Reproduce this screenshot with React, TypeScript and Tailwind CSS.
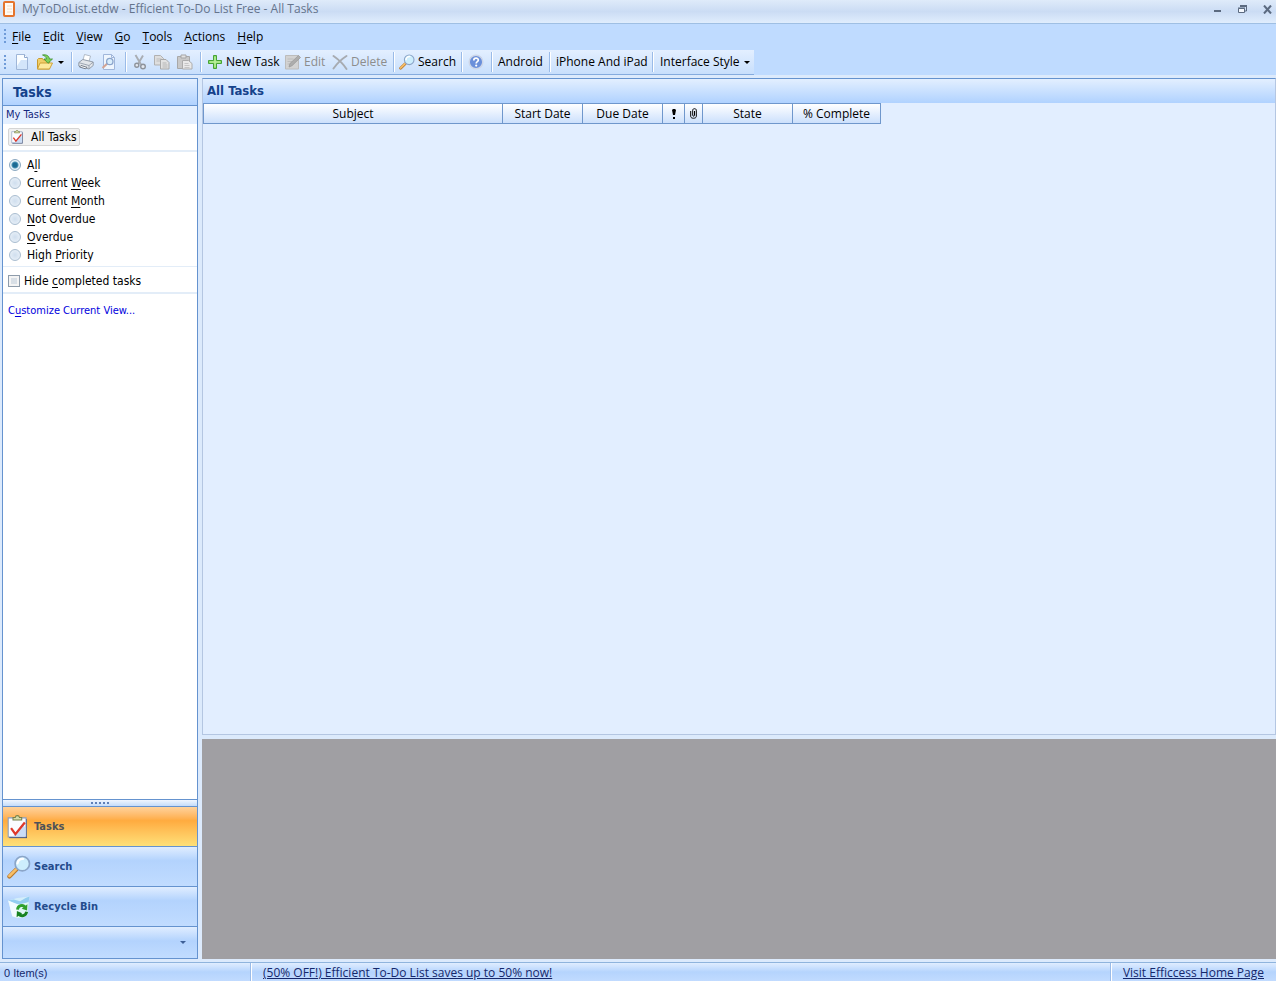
import { useState } from "react";
import type { ReactNode } from "react";
import clsx from "clsx";

// "&" marks the accelerator key, as in native menus
function Mnemonic({ text }: { text: string }) {
  const i = text.indexOf("&");
  if (i < 0) return <>{text}</>;
  return (
    <>
      {text.slice(0, i)}
      <span className="underline underline-offset-2">{text[i + 1]}</span>
      {text.slice(i + 2)}
    </>
  );
}

function Svg({ children, size = 16 }: { children: ReactNode; size?: number }) {
  return (
    <svg width={size} height={size} viewBox="0 0 16 16" fill="none" className="shrink-0" aria-hidden="true">
      {children}
    </svg>
  );
}

function NewIcon() {
  return (
    <Svg>
      <path d="M2.5.5h8l3 3v12h-11z" fill="#fafdff" stroke="#9fb6d8" />
      <path d="M7 6h6v9H3v-3z" fill="#d3e5fa" />
      <path d="M10.500.5v3h3" fill="#fff" stroke="#8ea8cf" />
    </Svg>
  );
}

function OpenIcon() {
  return (
    <Svg>
      <path d="M.5 15v-9.500l1-1h4l1 1.500h6v9z" fill="#f0cf6a" stroke="#c89a30" />
      <path d="M.5 15 3 9h12.500l-3 6z" fill="#fdea9c" stroke="#cfa136" />
      <path d="M5.500 1c4-.8 6.500.8 7 4h3l-4.500 4.300-4-4.300h2.500c-.3-1.900-1.600-3.200-4-4z" fill="#7fd05a" stroke="#3d9131" strokeWidth=".8" />
    </Svg>
  );
}

function PrintIcon() {
  return (
    <Svg>
      <path d="m5 6 1.500-5.500 6 1.500-1.500 5.500z" fill="#fff" stroke="#a3adba" strokeWidth=".8" />
      <path d="m.8 8.500 4-3 10.400 2.500v3.500l-4.200 3.500-10.200-3z" fill="#e3e6ea" stroke="#8b95a3" strokeWidth=".9" />
      <path d="m1 8.700 10 2.800 4-3.300M11 11.500v3.200" stroke="#8b95a3" strokeWidth=".8" />
      <path d="m3 11.500 6 1.800-1.500 1.500-6-1.800z" fill="#fff" stroke="#56606e" strokeWidth=".8" />
    </Svg>
  );
}

function PreviewIcon() {
  return (
    <Svg>
      <path d="M2.500.5h8l3 3v12h-11z" fill="#eef5fd" stroke="#a0b6da" />
      <path d="M10.500.5v3h3" stroke="#a0b6da" />
      <path d="m1.500 14 4.800-4.500" stroke="#d3a494" strokeWidth="2" />
      <circle cx="8.800" cy="7.500" r="3.200" fill="#d9edfb" stroke="#8aa4cc" strokeWidth="1.300" />
    </Svg>
  );
}

function CutIcon() {
  return (
    <Svg>
      <path d="M3.500 1 9 10.500M11 1.500 6 10" stroke="#a9adb3" strokeWidth="1.900" />
      <circle cx="4.800" cy="11.300" r="2" fill="#e3e8f0" stroke="#8e939b" strokeWidth="1.400" />
      <circle cx="11" cy="12.500" r="2.300" fill="#e3e8f0" stroke="#8e939b" strokeWidth="1.400" />
    </Svg>
  );
}

function CopyIcon() {
  return (
    <Svg>
      <path d="M.5 1.500h6l3 3v6.500h-9z" fill="#dedede" stroke="#b1b1b1" />
      <path d="M2.500 5h5M2.500 7h5" stroke="#bdbdbd" />
      <path d="M6.500 5.500h5.500l3 3v6.500h-8.500z" fill="#e2e2e2" stroke="#a9a9a9" />
      <path d="M8.500 9h4M8.500 11h5M8.500 13h5" stroke="#b5b5b5" />
    </Svg>
  );
}

function PasteIcon() {
  return (
    <Svg>
      <path d="M.5 2.500h12v12h-12z" fill="#c8c8c8" stroke="#a8a8a8" />
      <path d="M4 1h5v3H4z" fill="#e2e2e2" stroke="#a5a5a5" />
      <path d="M5.500 6.500h6l3.500 3v5.500h-9.500z" fill="#e9e9e9" stroke="#acacac" />
      <path d="M7.500 9.500h4M7.500 11.500h5M7.500 13.500h5" stroke="#bbb" strokeWidth=".8" />
    </Svg>
  );
}

function AddIcon() {
  return (
    <Svg>
      <path d="M6.500 1.500h3v5h5v3h-5v5h-3v-5h-5v-3h5z" fill="#8fdc6c" stroke="#46a336" strokeLinejoin="round" />
      <path d="M8 3v10M3 8h10" stroke="#c5f3ab" />
    </Svg>
  );
}

function EditIcon() {
  return (
    <Svg>
      <path d="M.5 1.500h13v13.500h-13z" fill="#d2d2d2" stroke="#bcbcbc" />
      <path d="M2.500 5h6M2.500 7.500h5M2.500 10h3" stroke="#bcbcbc" />
      <path d="m4 13 1-3.500 8.500-8 2 2-8.500 8.200z" fill="#adadad" stroke="#9a9a9a" strokeWidth=".8" />
    </Svg>
  );
}

function DeleteIcon() {
  return (
    <Svg>
      <path d="M1.500 2c5 3.500 9.500 7.500 13 13M14.500 2c-5.500 3.500-9.500 7.500-13 12.500" stroke="#a7abb1" strokeWidth="1.900" strokeLinecap="round" />
    </Svg>
  );
}

function SearchIcon({ size }: { size?: number }) {
  return (
    <Svg size={size}>
      <path d="m1.600 14.300 4.600-4.600" stroke="#b8792f" strokeWidth="2.800" strokeLinecap="round" />
      <path d="m1.600 14 4.400-4.400" stroke="#f7bf68" strokeWidth="1.700" strokeLinecap="round" />
      <circle cx="10.200" cy="5.800" r="4.800" fill="#cdeefd" stroke="#8ba5c8" strokeWidth="1.100" />
      <path d="M7 5.600c.2-2.100 1.800-3.200 3.700-3" stroke="#fff" strokeWidth="1.500" strokeLinecap="round" />
    </Svg>
  );
}

function HelpIcon() {
  return (
    <Svg>
      <circle cx="8" cy="8" r="6.800" fill="#6a8fda" stroke="#cdd6e8" strokeWidth="1.500" />
      <path d="M5.800 6.400c0-3 4.600-2.900 4.500-.2 0 1.500-2.100 1.500-2.100 3.200" stroke="#fff" strokeWidth="1.700" />
      <circle cx="8.200" cy="11.600" r="1.100" fill="#fff" />
    </Svg>
  );
}

function TaskIcon({ size }: { size?: number }) {
  return (
    <Svg size={size}>
      <path d="M1.500 2.700h11.800v12.700h-11.800z" fill="#20305a" />
      <path d="M.8 1.900h11.900v12.800h-11.900z" fill="#fafcff" stroke="#8b9cbc" strokeWidth=".7" />
      <path d="M10.500 5.500 12.300 9v5.300h-8.300z" fill="#c9dcf6" />
      <path d="M4 3.300v-1.600h1.500c.2-1.700 2.600-1.700 2.800 0h1.500v1.600z" fill="#d7dda9" stroke="#76804b" strokeWidth=".7" />
      <path d="m2.700 8.800 2.900 4 6.300-7.800" stroke="#df382a" strokeWidth="1.500" />
    </Svg>
  );
}

function RecycleIcon({ size }: { size?: number }) {
  return (
    <Svg size={size}>
      <path d="m.8 3.600 6-1.600 8.200-1-1.500 12.200-2 1.600-4.500.6-3.500-1.200z" fill="#d3eefa" />
      <path d="m.8 3.600 3.700-.6 4.200 1.200 4-2.400L15 1l-.6 3.800-5.400 1.700-4-.6z" fill="#93cdf0" />
      <path d="m.8 3.600 6.700 2.700-.8 8.800-3.200-.9z" fill="#f2fbff" />
      <path d="m7.500 6.300 6.800-1.500-.8 8.400-2 1.600-4.800.6z" fill="#dff6f6" />
      <path d="M7 9.700C7.300 6.900 10.500 6.300 12 8" stroke="#2fa02c" strokeWidth="1.900" />
      <path d="m13.600 6.200-.2 4.200-3.600-1.300z" fill="#2fa02c" />
      <path d="M13.100 11.200c-.5 2.800-3.600 3.400-5.200 1.700" stroke="#168221" strokeWidth="1.900" />
      <path d="m6.400 14.900.2-4.300 3.500 1.600z" fill="#168221" />
    </Svg>
  );
}

function Caret() {
  return (
    <svg width="6" height="3" viewBox="0 0 6 3" className="shrink-0" aria-hidden="true">
      <path d="M0 0h6L3 3z" fill="currentColor" />
    </svg>
  );
}

function Grip({ tall }: { tall?: boolean }) {
  return (
    <svg width="2" height={tall ? 16 : 14} className="shrink-0" aria-hidden="true">
      {[0, 4, 8, 12].map((y) => (
        <rect key={y} y={y} width="2" height="2" fill="#6f9bd8" />
      ))}
    </svg>
  );
}

function Separator() {
  return <span className="h-5 w-[2px] shrink-0 border-l border-[#9abbe8] bg-white" />;
}

function ToolButton({ label, text, icon, disabled, className }: { label: string; text?: boolean; icon?: ReactNode; disabled?: boolean; className?: string }) {
  return (
    <button
      type="button"
      aria-label={label}
      disabled={disabled}
      className={clsx("flex h-6 shrink-0 items-center gap-[3px] whitespace-nowrap", disabled ? "text-[#8d8d8d]" : "text-black", className)}
    >
      {icon}
      {text && label}
    </button>
  );
}

const menus = ["&File", "&Edit", "&View", "&Go", "&Tools", "&Actions", "&Help"];
const filters = ["A&ll", "Current &Week", "Current &Month", "&Not Overdue", "&Overdue", "High &Priority"];

const columns = [
  { name: "Subject", width: "w-[300px]" },
  { name: "Start Date", width: "w-20" },
  { name: "Due Date", width: "w-20" },
  { name: "Priority", width: "w-[22px]" },
  { name: "Attachment", width: "w-[18px]" },
  { name: "State", width: "w-[90px]" },
  { name: "% Complete", width: "w-[88px]" },
];

function ColumnTitle({ name }: { name: string }) {
  if (name === "Priority")
    return (
      <svg width="4" height="10" viewBox="0 0 4 10" className="mx-auto" role="img" aria-label={name}>
        <path d="M0 1l1-1h2l1 1-1 5H1zM1 8h2v2H1z" fill="#000" />
      </svg>
    );
  if (name === "Attachment")
    return (
      <svg width="7" height="11" viewBox="0 0 7 11" fill="none" className="mx-auto" role="img" aria-label={name}>
        <path d="M.7 3v5.500c0 2.300 5.600 2.300 5.600 0V2.200C6.300.2 2.700.2 2.700 2.200v5c0 1.300 1.800 1.300 1.800 0V3" stroke="#000" />
      </svg>
    );
  return <>{name}</>;
}

function TitleBar() {
  return (
    <header className="flex h-6 shrink-0 items-center border-b border-[#9fbfe3] bg-linear-to-b from-[#dfebfa] via-[#cbdcf4] to-[#e0edfd] pb-[5px] text-[#65748c]">
      <svg width="14" height="16" viewBox="0 0 14 16" className="ml-[2px]" aria-hidden="true">
        <rect x="2" y="1" width="10" height="14" rx="1" fill="#fffaf3" stroke="#e5742c" strokeWidth="2" />
        <path d="M5 5h5M5 8h5M5 11h5" stroke="#f6dcc3" />
      </svg>
      <h1 className="ml-[6px] flex-1 truncate">MyToDoList.etdw - Efficient To-Do List Free - All Tasks</h1>
      <div className="flex items-center gap-4 pr-1 text-[#5b6a80]">
        <button type="button" aria-label="Minimize">
          <svg width="9" height="9" viewBox="0 0 9 9">
            <path d="M1 5h7v2H1z" fill="currentColor" />
          </svg>
        </button>
        <button type="button" aria-label="Restore">
          <svg width="9" height="8" viewBox="0 0 9 8" fill="none">
            <path d="M2 .5h7M2 1.500h7M8.500 2v4H7M2.500 1v1" stroke="currentColor" />
            <path d="M.5 3.500h6v4h-6z" fill="#f4f8fe" stroke="currentColor" />
            <path d="M0 3h7" stroke="currentColor" />
          </svg>
        </button>
        <button type="button" aria-label="Close">
          <svg width="9" height="9" viewBox="0 0 9 9">
            <path d="m1 .5 7 8M8 .5l-7 8" stroke="currentColor" strokeWidth="2" />
          </svg>
        </button>
      </div>
    </header>
  );
}

function Toolbar() {
  return (
    <div className="flex h-[25px] w-fit shrink-0 items-center border-b border-[#84abde] bg-linear-to-b from-[#e3efff] to-[#c8dffc] px-1">
      <Grip />
      <ToolButton label="New" icon={<NewIcon />} className="ml-2 w-[23px]" />
      <ToolButton label="Open" icon={<OpenIcon />} className="w-[21px]" />
      <ToolButton label="Open recent" icon={<Caret />} className="w-[13px]" />
      <Separator />
      <ToolButton label="Print" icon={<PrintIcon />} className="ml-[5px] w-[23px]" />
      <ToolButton label="Print Preview" icon={<PreviewIcon />} className="w-6" />
      <Separator />
      <ToolButton label="Cut" icon={<CutIcon />} disabled className="ml-[5px] w-[22px]" />
      <ToolButton label="Copy" icon={<CopyIcon />} disabled className="w-[23px]" />
      <ToolButton label="Paste" icon={<PasteIcon />} disabled className="w-[23px]" />
      <Separator />
      <ToolButton label="New Task" text icon={<AddIcon />} className="ml-[5px] w-[78px]" />
      <ToolButton label="Edit" text icon={<EditIcon />} disabled className="w-[47px]" />
      <ToolButton label="Delete" text icon={<DeleteIcon />} disabled className="w-[61px]" />
      <Separator />
      <ToolButton label="Search" text icon={<SearchIcon />} className="ml-1 w-[62px]" />
      <Separator />
      <ToolButton label="Help" icon={<HelpIcon />} className="ml-[5px] w-[23px]" />
      <Separator />
      <ToolButton label="Android" text className="ml-[5px] w-[51px]" />
      <Separator />
      <ToolButton label="iPhone And iPad" text className="ml-[5px] w-[96px]" />
      <Separator />
      <button type="button" className="ml-[6px] flex h-6 items-center gap-1 whitespace-nowrap">
        Interface Style
        <Caret />
      </button>
    </div>
  );
}

function NavButton({ label, icon, active }: { label: string; icon: ReactNode; active?: boolean }) {
  return (
    <button
      type="button"
      className={clsx(
        "flex h-10 shrink-0 items-center gap-[3px] border-b border-[#6593cf] pl-1 text-[11px] leading-[18px] font-bold",
        active
          ? "bg-linear-to-b from-[#ffd29b] from-0% via-[#ffab3f] via-35% to-[#fee078] text-[#4f5157]"
          : "bg-linear-to-b from-[#e0edff] from-0% via-[#b3d3fd] via-35% to-[#c1dcff] text-[#234b8c]"
      )}
    >
      {icon}
      {label}
    </button>
  );
}

function Sidebar() {
  const [filter, setFilter] = useState(0);
  const [hide, setHide] = useState(false);

  return (
    <aside className="flex w-[196px] shrink-0 flex-col border border-[#6593cf] bg-white font-['DejaVu_Sans_Condensed','DejaVu_Sans',sans-serif]">
      <h2 className="h-[27px] shrink-0 border-b border-[#6593cf] bg-linear-to-b from-[#e3efff] to-[#b0d2ff] pl-[10px] text-sm leading-[26px] font-bold text-[#15428b]">Tasks</h2>
      <h3 className="h-[18px] shrink-0 bg-[#e3efff] pl-[3px] text-[11px] leading-[18px] text-[#15287d]">My Tasks</h3>
      <div className="border-b-2 border-[#e3edf8] px-[5px] py-1">
        <button type="button" className="flex h-[18px] items-center gap-[6px] rounded-xs border border-[#d5d5d5] bg-[#f1f1f1] px-[2px] text-xs">
          <TaskIcon size={14} />
          All Tasks
        </button>
      </div>
      <div className="border-b border-[#e3edf8] pt-1 pb-[2px] pl-[6px]">
        {filters.map((f, i) => (
          <label key={f} className="flex h-[18px] items-center gap-[6px] text-xs">
            <input
              type="radio"
              name="filter"
              checked={filter === i}
              onChange={() => setFilter(i)}
              className="size-3 appearance-none rounded-full border border-[#a9bdd0] bg-[radial-gradient(circle,#cfdeee,#eef4fa)] checked:border-[#8aa7c0] checked:bg-[radial-gradient(circle,#1b6a93_0_2px,#4d93b5_3px,#e6f2f8_4px)]"
            />
            <span>
              <Mnemonic text={f} />
            </span>
          </label>
        ))}
      </div>
      <label className="flex h-[27px] shrink-0 items-center gap-1 border-b-2 border-[#e3edf8] pt-[2px] pl-[5px] text-xs">
        <input
          type="checkbox"
          checked={hide}
          onChange={(e) => setHide(e.target.checked)}
          className="size-3 appearance-none border border-[#8e9cab] bg-[#d8dfe6] shadow-[inset_0_0_0_2px_#f4f4f4] checked:bg-[#1b6a93]"
        />
        <span>
          <Mnemonic text="Hide &completed tasks" />
        </span>
      </label>
      <a href="#customize" className="mt-2 ml-[5px] text-[11px] leading-[18px] text-[#0000dd]">
        <Mnemonic text="C&ustomize Current View..." />
      </a>

      <nav className="mt-auto flex flex-col">
        <div className="flex h-2 items-center justify-center gap-[2px] border-y border-[#6593cf] bg-linear-to-b from-[#f0f6ff] to-[#c4dcfb]">
          {[0, 1, 2, 3, 4].map((n) => (
            <span key={n} className="size-[2px] bg-[#6080b8]" />
          ))}
        </div>
        <NavButton label="Tasks" icon={<TaskIcon size={24} />} active />
        <NavButton label="Search" icon={<SearchIcon size={24} />} />
        <NavButton label="Recycle Bin" icon={<RecycleIcon size={24} />} />
        <button
          type="button"
          aria-label="Configure buttons"
          className="flex h-[31px] items-center justify-end bg-linear-to-b from-[#e0edff] from-0% via-[#b3d3fd] via-45% to-[#c1dcff] pr-[11px] text-[#3d5f96]"
        >
          <Caret />
        </button>
      </nav>
    </aside>
  );
}

function TaskPane() {
  return (
    <section className="flex min-h-0 flex-1 flex-col border border-[#b4c6e2] border-t-[#6593cf] bg-[#e2eeff]">
      <h2 className="h-6 shrink-0 bg-linear-to-b from-[#e3efff] to-[#b0d2ff] pl-1 font-['DejaVu_Sans_Condensed','DejaVu_Sans',sans-serif] text-[13px] leading-6 font-bold text-[#15428b]">
        All Tasks
      </h2>
      <table className="w-[678px] table-fixed border-separate border-spacing-0">
        <thead>
          <tr>
            {columns.map((c) => (
              <th
                key={c.name}
                scope="col"
                className={clsx("h-[21px] border-y border-r border-[#6f97cc] bg-linear-to-b from-white to-[#cce0fc] p-0 text-center font-normal first:border-l", c.width)}
              >
                <ColumnTitle name={c.name} />
              </th>
            ))}
          </tr>
        </thead>
      </table>
    </section>
  );
}

function StatusBar() {
  return (
    <footer className="flex h-[19px] shrink-0 items-center border-t border-[#8fb4dd] bg-linear-to-b from-[#e0edff] via-[#b5d4fd] to-[#c1dbff] pt-[2px] text-[#15286b]">
      <span className="w-[250px] pl-1 font-['Liberation_Sans',sans-serif] text-[11px]">0 Item(s)</span>
      <Separator />
      <a href="#offer" className="ml-[11px] flex-1 underline">
        (50% OFF!) Efficient To-Do List saves up to 50% now!
      </a>
      <Separator />
      <a href="#home" className="mr-3 ml-[11px] underline">
        Visit Efficcess Home Page
      </a>
    </footer>
  );
}

export default function App() {
  return (
    <div className="flex h-screen flex-col overflow-hidden bg-[#dceafc] font-['Open_Sans','Noto_Sans',sans-serif] text-xs text-black">
      <TitleBar />
      <div className="shrink-0 bg-[#bfdbff]">
        <nav className="flex h-[26px] items-center pl-1">
          <Grip tall />
          {menus.map((m) => (
            <button type="button" key={m} className="px-[6px]">
              <Mnemonic text={m} />
            </button>
          ))}
        </nav>
        <Toolbar />
      </div>
      <main className="mt-[3px] mb-[3px] ml-[2px] flex min-h-0 flex-1 gap-1">
        <Sidebar />
        <div className="flex min-w-0 flex-1 flex-col gap-1">
          <TaskPane />
          <section aria-label="Task details" className="h-[220px] shrink-0 bg-[#a09fa3]" />
        </div>
      </main>
      <StatusBar />
    </div>
  );
}
